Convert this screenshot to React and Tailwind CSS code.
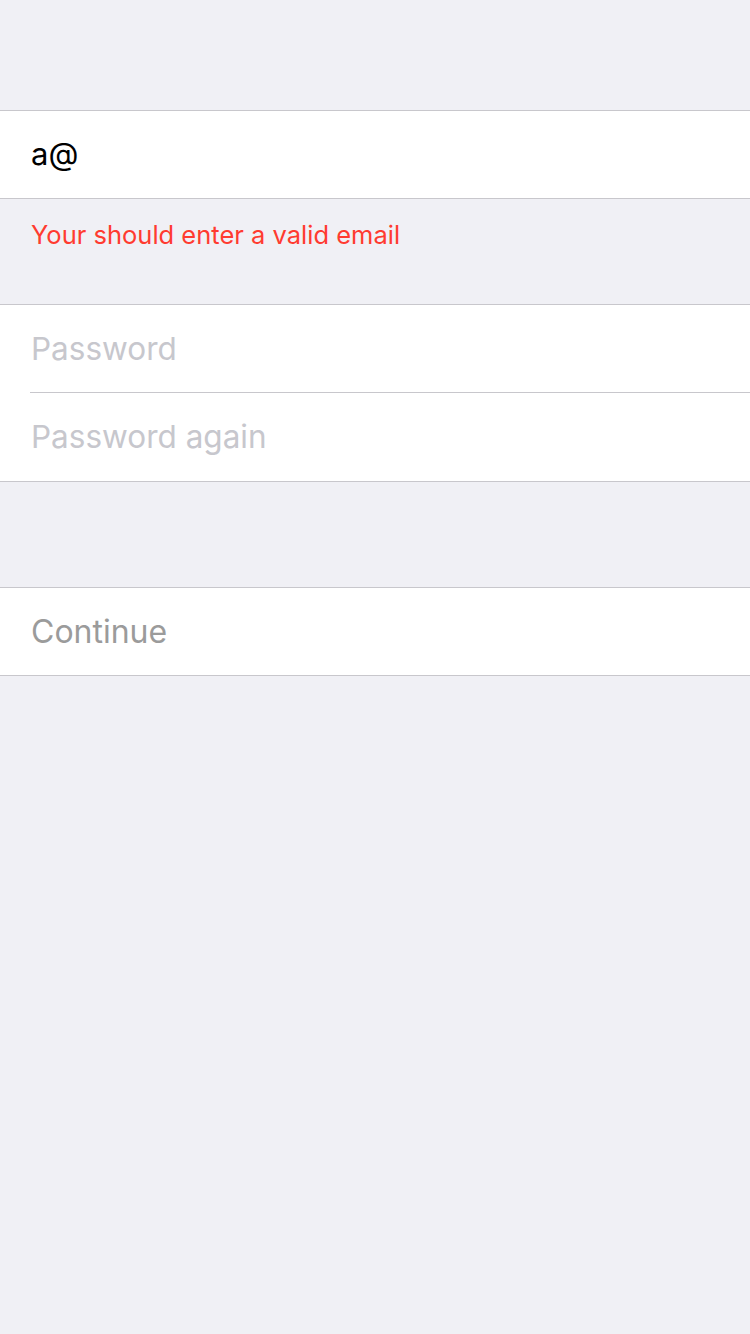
export default function App() {
  const font = { fontFamily: 'Inter, "Liberation Sans", Arial, sans-serif' };
  return (
    <div className="min-h-[1334px] w-[750px] bg-[#f0f0f5]" style={font}>
      <div className="h-[110px]" />
      <div className="border-y border-[#c8c7cc] bg-white">
        <div className="flex h-[87px] items-center pl-[31px] text-[31px] text-black">a@</div>
      </div>
      <div className="h-[105px] pl-[31px] pt-[17px] text-[25.5px] text-[#ff3b30]">
        Your should enter a valid email
      </div>
      <div className="border-y border-[#c8c7cc] bg-white">
        <div className="flex h-[87px] items-center pl-[31px] text-[31.5px] text-[#c7c7cd]">Password</div>
        <div className="ml-[30px] border-t border-[#c8c7cc]" />
        <div className="flex h-[88px] items-center pl-[31px] text-[31.5px] text-[#c7c7cd]">Password again</div>
      </div>
      <div className="h-[105px]" />
      <div className="border-y border-[#c8c7cc] bg-white">
        <div className="flex h-[87px] items-center pl-[31px] text-[32px] text-[#9b9b9b]">Continue</div>
      </div>
    </div>
  );
}
